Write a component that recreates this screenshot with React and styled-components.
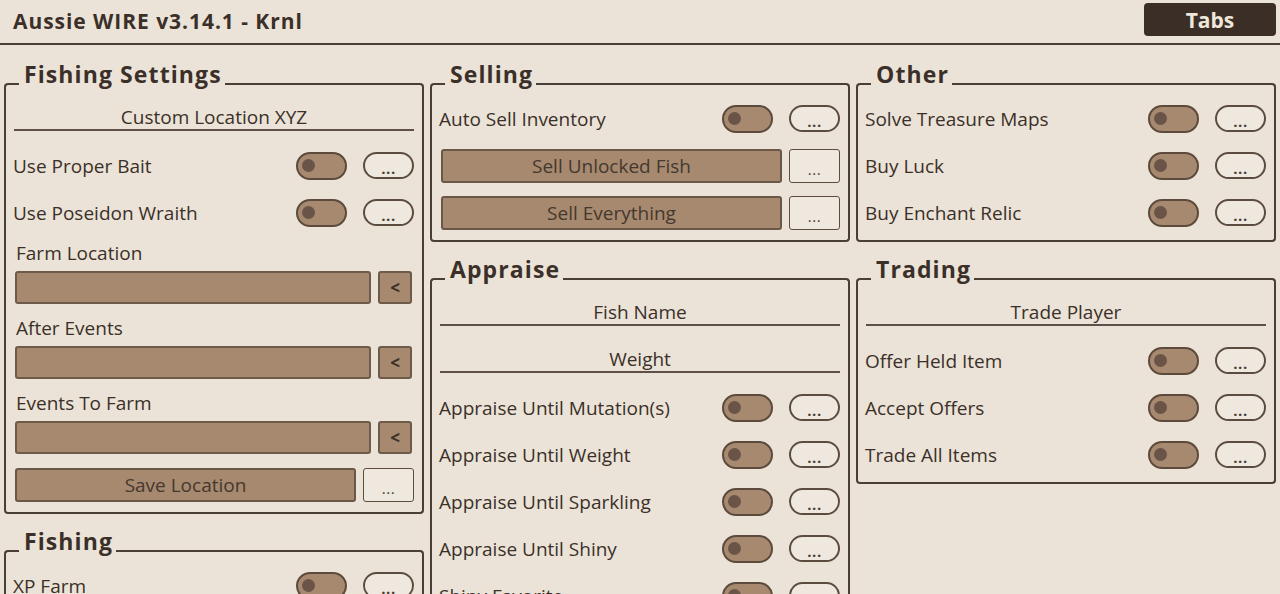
import React from 'react';
import styled, { createGlobalStyle } from 'styled-components';

const ink = '#3b3029';
const line = '#4a3f36';
const fill = '#a6896f';
const paper = '#ebe3d7';

const GlobalStyle = createGlobalStyle`
  html, body {
    margin: 0;
    padding: 0;
    height: 594px;
    overflow: hidden;
    background: ${paper};
  }
  body {
    font-family: 'Open Sans', 'Liberation Sans', sans-serif;
    color: ${ink};
  }
  * { box-sizing: border-box; }
`;

const Window = styled.div`
  height: 594px;
  overflow: hidden;
  display: flex;
  flex-direction: column;
`;

const TopBar = styled.header`
  flex: none;
  height: 45px;
  display: flex;
  align-items: flex-start;
  justify-content: space-between;
  padding: 0 4px 0 13px;
  border-bottom: 2px solid ${line};
`;

const AppTitle = styled.h1`
  margin: 0;
  font-size: 21px;
  line-height: 42px;
  font-weight: 700;
  color: ${ink};
  letter-spacing: 0.95px;
`;

const TabsButton = styled.button`
  margin-top: 3px;
  width: 132px;
  height: 33px;
  border: none;
  border-radius: 4px;
  background: #3a2e27;
  color: #efe7db;
  font-family: inherit;
  font-size: 21px;
  font-weight: 700;
`;

const Columns = styled.main`
  display: grid;
  grid-template-columns: repeat(3, 1fr);
  gap: 6px;
  padding: 16px 4px 0;
  align-items: start;
`;

const Column = styled.div`
  display: flex;
  flex-direction: column;
  gap: 14px;
`;

const PanelHead = styled.div`
  display: flex;
  align-items: flex-end;
`;

const CornerLeft = styled.span`
  flex: none;
  width: 15px;
  height: 4px;
  border-top: 2px solid ${line};
  border-left: 2px solid ${line};
  border-top-left-radius: 4px;
`;

const CornerRight = styled.span`
  flex: 1;
  height: 4px;
  border-top: 2px solid ${line};
  border-right: 2px solid ${line};
  border-top-right-radius: 4px;
`;

const PanelTitle = styled.h2`
  margin: 0;
  padding: 0 3px 0 5px;
  font-size: 23px;
  line-height: 26px;
  font-weight: 700;
  color: ${ink};
  letter-spacing: 1.1px;
`;

const PanelBody = styled.div`
  border: 2px solid ${line};
  border-top: none;
  border-radius: 0 0 4px 4px;
  padding: 8px 8px 4px 7px;
  display: flex;
  flex-direction: column;
`;

const TextField = styled.div`
  height: 36px;
  margin: 0 0 11px 1px;
  display: flex;
  align-items: flex-end;
  justify-content: center;
  border-bottom: 2px solid #5e5046;
  font-size: 19px;
  line-height: 24px;
`;

const Row = styled.div`
  height: 47px;
  display: flex;
  align-items: center;
`;

const Label = styled.span`
  flex: 1;
  font-size: 19px;
  white-space: nowrap;
`;

const Toggle = styled.span`
  width: 51px;
  height: 28px;
  border: 2px solid #5c4a3c;
  border-radius: 14px;
  background: ${fill};
  display: flex;
  align-items: center;
  padding-left: 4px;
`;

const Knob = styled.span`
  width: 13px;
  height: 13px;
  border-radius: 50%;
  background: #6a5448;
`;

const DotsButton = styled.button`
  margin-left: 16px;
  width: 51px;
  height: ${p => (p.$square ? '34px' : '27px')};
  border: ${p => (p.$square ? '1.5px' : '2px')} solid #5c4c40;
  border-radius: ${p => (p.$square ? '3px' : '14px')};
  background: #eee8de;
  color: #4a3d33;
  font-family: inherit;
  font-size: 15px;
  font-weight: ${p => (p.$square ? 400 : 700)};
  line-height: 1;
  padding: ${p => (p.$square ? '8px' : '6px')} 0 0;
  letter-spacing: 0.5px;
`;

const ActionRow = styled(Row)`
  padding-left: 2px;
  gap: 7px;
  & > ${DotsButton} { margin-left: 0; }
`;

const ActionButton = styled.button`
  flex: 1;
  height: 34px;
  border: 2px solid #6b5747;
  border-radius: 3px;
  background: ${fill};
  color: #45382e;
  font-family: inherit;
  font-size: 19px;
  padding: 0;
`;

const Dropdown = styled.div`
  padding: 6px 0 7px 2px;
  display: flex;
  flex-direction: column;
  gap: 7px;
`;

const DropLabel = styled.span`
  padding-left: 1px;
  font-size: 19px;
  line-height: 22px;
`;

const DropRow = styled.div`
  display: flex;
  gap: 7px;
  padding-right: 2px;
`;

const SelectBox = styled.div`
  flex: 1;
  height: 33px;
  border: 2px solid #6e5a49;
  border-radius: 3px;
  background: ${fill};
`;

const ArrowButton = styled.button`
  width: 34px;
  height: 33px;
  border: 2px solid #6e5a49;
  border-radius: 3px;
  background: ${fill};
  color: #3b3029;
  font-family: inherit;
  font-size: 17px;
  font-weight: 700;
  padding: 0;
`;

function Panel({ title, children }) {
  return (
    <section>
      <PanelHead>
        <CornerLeft />
        <PanelTitle>{title}</PanelTitle>
        <CornerRight />
      </PanelHead>
      <PanelBody>{children}</PanelBody>
    </section>
  );
}

function ToggleRow({ label }) {
  return (
    <Row>
      <Label>{label}</Label>
      <Toggle><Knob /></Toggle>
      <DotsButton>...</DotsButton>
    </Row>
  );
}

function ButtonRow({ label }) {
  return (
    <ActionRow>
      <ActionButton>{label}</ActionButton>
      <DotsButton $square>...</DotsButton>
    </ActionRow>
  );
}

function Select({ label }) {
  return (
    <Dropdown>
      <DropLabel>{label}</DropLabel>
      <DropRow>
        <SelectBox />
        <ArrowButton>&lt;</ArrowButton>
      </DropRow>
    </Dropdown>
  );
}

export default function App() {
  return (
    <Window>
      <GlobalStyle />
      <TopBar>
        <AppTitle>Aussie WIRE v3.14.1 - Krnl</AppTitle>
        <TabsButton>Tabs</TabsButton>
      </TopBar>
      <Columns>
        <Column>
          <Panel title="Fishing Settings">
            <TextField>Custom Location XYZ</TextField>
            <ToggleRow label="Use Proper Bait" />
            <ToggleRow label="Use Poseidon Wraith" />
            <Select label="Farm Location" />
            <Select label="After Events" />
            <Select label="Events To Farm" />
            <ButtonRow label="Save Location" />
          </Panel>
          <Panel title="Fishing">
            <ToggleRow label="XP Farm" />
            <ToggleRow label="Auto Cast" />
          </Panel>
        </Column>
        <Column>
          <Panel title="Selling">
            <ToggleRow label="Auto Sell Inventory" />
            <ButtonRow label="Sell Unlocked Fish" />
            <ButtonRow label="Sell Everything" />
          </Panel>
          <Panel title="Appraise">
            <TextField>Fish Name</TextField>
            <TextField>Weight</TextField>
            <ToggleRow label="Appraise Until Mutation(s)" />
            <ToggleRow label="Appraise Until Weight" />
            <ToggleRow label="Appraise Until Sparkling" />
            <ToggleRow label="Appraise Until Shiny" />
            <ToggleRow label="Shiny Favorite" />
          </Panel>
        </Column>
        <Column>
          <Panel title="Other">
            <ToggleRow label="Solve Treasure Maps" />
            <ToggleRow label="Buy Luck" />
            <ToggleRow label="Buy Enchant Relic" />
          </Panel>
          <Panel title="Trading">
            <TextField>Trade Player</TextField>
            <ToggleRow label="Offer Held Item" />
            <ToggleRow label="Accept Offers" />
            <ToggleRow label="Trade All Items" />
          </Panel>
        </Column>
      </Columns>
    </Window>
  );
}
